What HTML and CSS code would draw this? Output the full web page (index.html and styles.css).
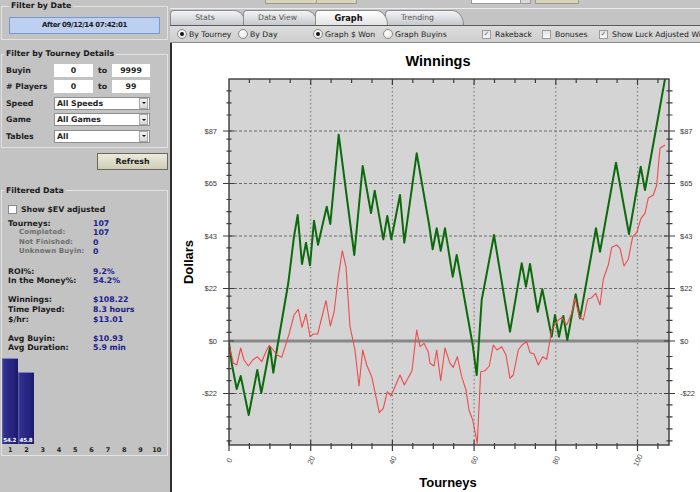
FILE: index.html
```html
<!DOCTYPE html>
<html>
<head>
<meta charset="utf-8">
<title>Graph</title>
<link rel="stylesheet" href="styles.css">
</head>
<body>
<div class="app">
  <aside class="sidebar">
    <fieldset class="fs fs-date">
      <legend>Filter by Date</legend>
      <div class="datebtn">After 09/12/14 07:42:01</div>
    </fieldset>
    <fieldset class="fs fs-tourney">
      <legend>Filter by Tourney Details</legend>
      <div class="frow"><span class="flabel">Buyin</span><span class="inp">0</span><span class="to">to</span><span class="inp">9999</span></div>
      <div class="frow"><span class="flabel"># Players</span><span class="inp">0</span><span class="to">to</span><span class="inp">99</span></div>
      <div class="frow"><span class="flabel">Speed</span><span class="sel"><span>All Speeds</span><span class="arr"></span></span></div>
      <div class="frow"><span class="flabel">Game</span><span class="sel"><span>All Games</span><span class="arr"></span></span></div>
      <div class="frow"><span class="flabel">Tables</span><span class="sel"><span>All</span><span class="arr"></span></span></div>
    </fieldset>
    <div class="refresh-row"><button class="refresh" type="button">Refresh</button></div>
    <fieldset class="fs fs-data">
      <legend>Filtered Data</legend>
      <label class="ev"><span class="cb"></span>Show $EV adjusted</label>
      <div class="stats">
        <div class="srow"><span class="sl">Tourneys:</span><span class="sv">107</span></div>
        <div class="srow sub"><span class="sl">Completed:</span><span class="sv">107</span></div>
        <div class="srow sub"><span class="sl">Not Finished:</span><span class="sv">0</span></div>
        <div class="srow sub"><span class="sl">Unknown Buyin:</span><span class="sv">0</span></div>
        <div class="srow gap"><span class="sl">ROI%:</span><span class="sv">9.2%</span></div>
        <div class="srow"><span class="sl">In the Money%:</span><span class="sv">54.2%</span></div>
        <div class="srow gap"><span class="sl">Winnings:</span><span class="sv">$108.22</span></div>
        <div class="srow"><span class="sl">Time Played:</span><span class="sv">8.3 hours</span></div>
        <div class="srow"><span class="sl">$/hr:</span><span class="sv">$13.01</span></div>
        <div class="srow gap"><span class="sl">Avg Buyin:</span><span class="sv">$10.93</span></div>
        <div class="srow"><span class="sl">Avg Duration:</span><span class="sv">5.9 min</span></div>
      </div>
      <div class="bars">
        <div class="bcol"><div class="bar" style="height:86px"><span>54.2</span></div></div>
        <div class="bcol"><div class="bar" style="height:72px"><span>45.8</span></div></div>
        <div class="bcol"></div><div class="bcol"></div><div class="bcol"></div>
        <div class="bcol"></div><div class="bcol"></div><div class="bcol"></div>
        <div class="bcol"></div><div class="bcol"></div>
      </div>
      <div class="blabels">
        <span>1</span><span>2</span><span>3</span><span>4</span><span>5</span><span>6</span><span>7</span><span>8</span><span>9</span><span>10</span>
      </div>
    </fieldset>
  </aside>

  <main class="main">
    <div class="toolbar">
      <span class="tb tb-a"></span><span class="tb tb-b"></span>
      <span class="tb-input"></span><span class="tb-dd"></span>
      <span class="tb tb-c"></span>
    </div>
    <div class="tabs">
      <div class="tab t-stats">Stats</div>
      <div class="tab t-data">Data View</div>
      <div class="tab t-graph active">Graph</div>
      <div class="tab t-trend">Trending</div>
    </div>
    <div class="options">
      <span class="opt"><span class="radio on"></span>By Tourney</span>
      <span class="opt"><span class="radio"></span>By Day</span>
      <span class="opt"><span class="radio on"></span>Graph $ Won</span>
      <span class="opt"><span class="radio"></span>Graph Buyins</span>
      <span class="opt"><span class="cbx on">✓</span>Rakeback</span>
      <span class="opt"><span class="cbx"></span>Bonuses</span>
      <span class="opt"><span class="cbx on">✓</span>Show Luck Adjusted Winnings</span>
    </div>
    <div class="chart">
      <svg class="plot" width="528" height="449" viewBox="172 43 528 449" xmlns="http://www.w3.org/2000/svg">
        <defs>
          <clipPath id="pc"><rect x="229" y="79" width="440" height="366"/></clipPath>
        </defs>
        <text class="title" x="438" y="66" text-anchor="middle">Winnings</text>
        <text class="axt" x="0" y="0" text-anchor="middle" transform="translate(193 262) rotate(-90)">Dollars</text>
        <text class="axt" x="448" y="487" text-anchor="middle">Tourneys</text>

        <rect x="229" y="79" width="440" height="366" fill="#d4d4d4"/>

        <!-- vertical dotted grid -->
        <path d="M310.7 79V445M392.4 79V445M474.1 79V445M555.8 79V445M637.5 79V445" stroke="#7a7a7a" stroke-width="1.1" stroke-dasharray="1.4 2.6" fill="none"/>
        <!-- horizontal dashed grid -->
        <path d="M229 131H669M229 183.5H669M229 236H669M229 288.5H669M229 393.5H669" stroke="#6c6c6c" stroke-width="1" stroke-dasharray="3 2" fill="none"/>
        <!-- zero line -->
        <path d="M229 341H669" stroke="#888" stroke-width="3"/>

        <g clip-path="url(#pc)" fill="none" stroke-linejoin="round">
          <polyline stroke="#0b6b0b" stroke-width="2" points="229,343 232,365 236.7,389 240.7,376 248.7,415 257.3,370 261.3,393 270,347 273.3,372.7 277.3,347 288.3,283 294,236.7 297.7,215 302,264 306,242.7 310,265.3 314,220.7 318,244.7 326.7,206.7 330.3,224 338.7,134.7 354.3,255 362.7,166 371,213 374.7,190.7 383.3,239.3 387.3,216 391.3,239.3 400,195 404.3,242.7 416.7,153.3 429,224 432.7,249.3 436.7,228.3 440.7,250.7 445,228.3 452.7,276.7 456.7,255 472.7,345 476.7,375 481.7,300 494,235 510,331.7 521.7,263.3 526,286.7 530,264 537.7,311.7 542.3,289.3 551.7,336.7 555,315 559,336.7 563.3,316 567.3,340 575.7,294.3 580,318.3 596,228.3 600,251.7 616,162.7 629,234 640.7,166.7 645,190 665,79 667,72"/>
          <polyline stroke="#f04a4a" stroke-width="1.1" points="229,345 233.3,363 236.7,365 240.7,348 244,360 248.3,366 252.7,360 257.3,356.7 261.7,361.7 266.7,350 269.3,345.3 273.3,350 277,355 281.7,357.3 285,347 289.3,333.3 294,315 298.3,309.3 302,327.3 306,314 310,336.7 313.3,334 317.7,334 326,300.7 330.3,326 334,312.7 338.3,276.7 342.3,250.7 346,266.7 350,326.7 355,350 359,386 362.7,350 366.7,365 371.7,376.7 379.3,412.7 383.3,408.3 387.3,391.7 391,396 400,375 404.3,385 412,370.7 416.7,330 420,346.7 424,343.3 428.3,352 430,363.3 434,366 436.7,350 440.7,380.7 445,348 450,363.3 453.3,367.3 457.3,356.7 461.7,376.7 466,390 469,410 472.7,420 477.3,443.3 480.7,371.7 485,370.7 489.3,366 493.3,345 497,350 501.7,346.7 506,355 510,378.3 513.3,375 518.3,350 522,345 526.7,341.7 530,352.7 534,354 538.3,365 542.7,356.7 546.7,359.3 548.3,350 551.7,330 556.7,321.7 561.7,317.3 566.7,325 571.7,313.3 575,298.3 579.3,316.7 583.3,320 587.7,299.3 591.7,297.7 595.7,293.3 600,305 603.3,279.3 608.3,265 611.7,247.3 616.7,245 620,248.3 624,266 628.3,259.3 632.7,236.7 636.7,232.7 641,218.3 645,213.3 648.3,198 653.3,195 656.7,185 660,148.3 665,145"/>
        </g>

        <!-- frame -->
        <rect x="229" y="79" width="440" height="366" fill="none" stroke="#3c3c3c" stroke-width="1.4"/>

        <!-- ticks -->
        <g stroke="#3c3c3c" stroke-width="1.2" fill="none">
          <path d="M249.4 443v6M269.9 443v6M290.3 443v6M331.1 443v6M351.6 443v6M372 443v6M412.8 443v6M433.3 443v6M453.7 443v6M494.5 443v6M515 443v6M535.4 443v6M576.2 443v6M596.7 443v6M617.1 443v6M657.9 443v6"/>
          <path d="M229 440v11M310.7 440v11M392.4 440v11M474.1 440v11M555.8 440v11M637.5 440v11"/>
          <path d="M249.4 79v4M269.9 79v4M290.3 79v4M331.1 79v4M351.6 79v4M372 79v4M412.8 79v4M433.3 79v4M453.7 79v4M494.5 79v4M515 79v4M535.4 79v4M576.2 79v4M596.7 79v4M617.1 79v4M657.9 79v4M310.7 79v6M392.4 79v6M474.1 79v6M555.8 79v6M637.5 79v6"/>
          <path d="M226.5 90.8h5M226.5 102.9h5M226.5 115h5M226.5 139.1h5M226.5 151.2h5M226.5 163.3h5M226.5 175.4h5M226.5 199.5h5M226.5 211.6h5M226.5 223.7h5M226.5 247.8h5M226.5 259.9h5M226.5 272h5M226.5 296.1h5M226.5 308.2h5M226.5 320.3h5M226.5 332.3h5M226.5 356.5h5M226.5 368.6h5M226.5 380.6h5M226.5 404.8h5M226.5 416.8h5M226.5 428.9h5M226.5 440.9h5"/>
          <path d="M666.5 90.8h6M666.5 102.9h6M666.5 115h6M666.5 139.1h6M666.5 151.2h6M666.5 163.3h6M666.5 175.4h6M666.5 199.5h6M666.5 211.6h6M666.5 223.7h6M666.5 247.8h6M666.5 259.9h6M666.5 272h6M666.5 296.1h6M666.5 308.2h6M666.5 320.3h6M666.5 332.3h6M666.5 356.5h6M666.5 368.6h6M666.5 380.6h6M666.5 404.8h6M666.5 416.8h6M666.5 428.9h6M666.5 440.9h6"/>
          <path d="M223 131h11M223 183.5h11M223 236h11M223 288.5h11M223 341h11M223 393.5h11M664 131h11M664 183.5h11M664 236h11M664 288.5h11M664 341h11M664 393.5h11"/>
        </g>

        <g class="ylab">
          <text x="217" y="133.5" text-anchor="end">$87</text>
          <text x="217" y="186" text-anchor="end">$65</text>
          <text x="217" y="238.5" text-anchor="end">$43</text>
          <text x="217" y="291" text-anchor="end">$22</text>
          <text x="217" y="343.5" text-anchor="end">$0</text>
          <text x="217" y="396" text-anchor="end">-$22</text>
          <text x="680" y="133.5">$87</text>
          <text x="680" y="186">$65</text>
          <text x="680" y="238.5">$43</text>
          <text x="680" y="291">$22</text>
          <text x="680" y="343.5">$0</text>
          <text x="680" y="396">-$22</text>
        </g>
        <g class="xlab" text-anchor="middle">
          <text x="229" y="463" transform="rotate(-65 229 460)">0</text>
          <text x="310.7" y="463" transform="rotate(-65 310.7 460)">20</text>
          <text x="392.4" y="463" transform="rotate(-65 392.4 460)">40</text>
          <text x="474.1" y="463" transform="rotate(-65 474.1 460)">60</text>
          <text x="555.8" y="463" transform="rotate(-65 555.8 460)">80</text>
          <text x="637.5" y="463" transform="rotate(-65 637.5 460)">100</text>
        </g>
      </svg>
    </div>
  </main>
</div>
</body>
</html>
```

FILE: styles.css
```css
* { box-sizing: border-box; }
html, body { margin: 0; padding: 0; }
body {
  width: 700px;
  height: 492px;
  overflow: hidden;
  background: #c4c4c4;
  font-family: "DejaVu Sans", Verdana, sans-serif;
}
.app { display: flex; width: 700px; height: 492px; }

/* ---------- sidebar ---------- */
.sidebar {
  width: 170px;
  flex: none;
  background: #c3c3c3;
  color: #1e1e1e;
  font-size: 7.8px;
  font-weight: bold;
  padding-top: 1px;
}
.fs {
  margin: 0 2px 0 1px;
  border: 1px solid #e2e2e2;
  padding: 0 2px;
  min-width: 0;
}
.fs legend {
  padding: 0 2px;
  line-height: 10px;
  font-size: 7.8px;
  color: #1a1a1a;
}
.fs-date { padding: 6px 7px 5px; }
.datebtn {
  height: 17px;
  border: 1px solid #7b98cc;
  background: #bdd0f1;
  text-align: center;
  line-height: 15px;
  font-size: 7px;
  letter-spacing: -0.4px;
  color: #1a1a1a;
}
.fs-tourney {
  margin-top: 9px;
  padding: 5px 2px 4px;
  display: flex;
  flex-direction: column;
  gap: 3.4px;
}
.frow { display: flex; align-items: center; height: 13px; }
.flabel { width: 50px; padding-left: 2px; flex: none; }
.inp {
  width: 39px;
  height: 13px;
  background: #fff;
  text-align: center;
  line-height: 13px;
  flex: none;
}
.frow .inp:last-child { width: 38px; }
.to { width: 19px; padding-left: 5px; flex: none; }
.sel {
  width: 96px;
  height: 13px;
  background: #fff;
  border: 1px solid #8e8e8e;
  display: flex;
  align-items: center;
  justify-content: space-between;
  padding-left: 2px;
}
.arr {
  width: 9px;
  height: 11px;
  margin-right: 1px;
  background: linear-gradient(#f2f2f2, #d8d8d8);
  border: 1px solid #a8a8a8;
  display: flex;
  align-items: center;
  justify-content: center;
}
.arr::after {
  content: "";
  border-left: 2px solid transparent;
  border-right: 2px solid transparent;
  border-top: 2px solid #111;
}
.refresh-row { display: flex; justify-content: flex-end; padding: 5px 2px 0 0; }
.refresh {
  width: 71px;
  height: 17px;
  margin: 0;
  padding: 0;
  border: 1px solid #6a6a5a;
  background: linear-gradient(#ecebdc, #cfcdb6);
  font-family: "DejaVu Sans", Verdana, sans-serif;
  font-weight: bold;
  font-size: 7.8px;
  color: #1a1a1a;
}
.fs-data {
  margin-top: 16px;
  padding: 9px 2px 0;
}
.ev { display: flex; align-items: center; height: 10px; padding-left: 4px; gap: 4px; }
.cb {
  width: 9px;
  height: 9px;
  background: #fff;
  border: 1px solid #8a8a8a;
}
.stats { margin-top: 4px; }
.srow { display: flex; height: 9.6px; line-height: 9.6px; padding-left: 4px; white-space: nowrap; }
.srow.gap { margin-top: 9.6px; }
.sl { width: 85px; flex: none; color: #1c1c1c; }
.sub .sl { padding-left: 11px; color: #6e6e6e; font-size: 7px; letter-spacing: 0.1px; }
.sv { color: #20208c; }
.bars {
  margin: 5.4px 0 0 -2px;
  height: 86px;
  display: grid;
  grid-template-columns: repeat(10, 16.3px);
  align-items: end;
}
.bcol { height: 100%; display: flex; align-items: flex-end; }
.bar {
  width: 15.5px;
  background: linear-gradient(to right, #6464b4 0, #31318c 2px, #242480 70%, #1a1a66 100%);
  border-top: 1px solid #7d7dc0;
  display: flex;
  align-items: flex-end;
  justify-content: center;
  color: #fff;
  font-size: 5.6px;
  letter-spacing: -0.2px;
  padding-bottom: 1px;
}
.blabels {
  margin: 2px 0 0 -2px;
  height: 9px;
  display: grid;
  grid-template-columns: repeat(10, 16.3px);
  font-size: 6.5px;
  line-height: 9px;
  text-align: center;
}

/* ---------- main ---------- */
.main {
  flex: 1;
  min-width: 0;
  display: flex;
  flex-direction: column;
  background: #c4c4c4;
}
.toolbar {
  height: 9px;
  flex: none;
  display: flex;
  align-items: flex-start;
  border-bottom: 1px solid #ececec;
}
.tb { height: 4px; background: #d7d6bd; border: 1px solid #9c9b86; border-top: none; }
.tb-a { margin-left: 95px; width: 52px; }
.tb-b { width: 40px; border-left: none; }
.tb-input { margin-left: 114px; width: 50px; height: 4px; background: #fff; border: 1px solid #9a9a9a; border-top: none; }
.tb-dd { width: 10px; height: 4px; background: #d8d8d8; border: 1px solid #9a9a9a; border-top: none; border-left: none; }
.tb-c { margin-left: 4px; width: 44px; }

.tabs {
  height: 16px;
  flex: none;
  display: flex;
  align-items: flex-end;
}
.tab {
  height: 15px;
  border: 1px solid #8c8c8c;
  border-bottom: none;
  border-radius: 4px 12px 0 0 / 4px 15px 0 0;
  background: linear-gradient(#f3f4f6, #c5c8cd);
  color: #555;
  font-size: 7.7px;
  line-height: 14px;
  text-align: center;
  padding-right: 6px;
  margin-right: -3px;
}
.t-stats { width: 76px; margin-left: 0; }
.t-data { width: 75px; }
.t-graph { width: 73px; }
.t-trend { width: 79px; padding-right: 14px; }
.tab.active {
  position: relative;
  z-index: 1;
  background: linear-gradient(#ffffff, #e3e3e3);
  color: #111;
  font-weight: bold;
  font-size: 8.2px;
}

.options {
  height: 18px;
  flex: none;
  border-top: 1px solid #5a5a5a;
  border-bottom: 1px solid #8a8a8a;
  background: linear-gradient(#dcdcdc, #cfcfcf);
  display: grid;
  grid-template-columns: 61px 75px 70px 99px 60px 57px 1fr;
  align-items: center;
  padding-left: 7px;
  font-size: 7.7px;
  color: #222;
  white-space: nowrap;
  overflow: hidden;
}
.opt { display: flex; align-items: center; gap: 2px; }
.radio {
  width: 10px;
  height: 10px;
  flex: none;
  border-radius: 50%;
  border: 1px solid #8a8a8a;
  background: radial-gradient(circle at 40% 35%, #ffffff, #dedede);
  display: flex;
  align-items: center;
  justify-content: center;
}
.radio.on::after {
  content: "";
  width: 4px;
  height: 4px;
  border-radius: 50%;
  background: #111;
}
.cbx {
  width: 9px;
  height: 9px;
  flex: none;
  border: 1px solid #9c9c9c;
  background: linear-gradient(#e4e4e4, #fafafa);
  color: #6a6a6a;
  font-size: 7px;
  line-height: 7px;
  text-align: center;
  margin-right: 2px;
}

.chart {
  flex: 1;
  background: #fff;
  border-left: 2px solid #2e2e2e;
  overflow: hidden;
}
.plot { display: block; }
.title { font-family: "Liberation Sans", Arial, sans-serif; font-weight: bold; font-size: 14.5px; fill: #000; }
.axt { font-family: "Liberation Sans", Arial, sans-serif; font-weight: bold; font-size: 13px; fill: #000; }
.ylab text { font-family: "Liberation Sans", Arial, sans-serif; font-size: 7.5px; fill: #3a3a3a; }
.xlab text { font-family: "Liberation Sans", Arial, sans-serif; font-size: 7.5px; fill: #555; }
```
